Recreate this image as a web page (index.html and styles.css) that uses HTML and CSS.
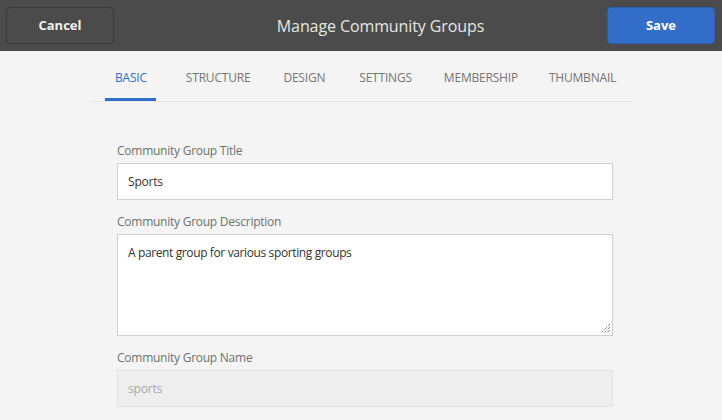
FILE: index.html
```html
<!DOCTYPE html>
<html>
<head>
<meta charset="utf-8">
<link rel="stylesheet" href="styles.css">
</head>
<body>
<header class="topbar">
  <button class="btn btn-cancel">Cancel</button>
  <h1 class="title">Manage Community Groups</h1>
  <button class="btn btn-save">Save</button>
</header>
<main class="content">
  <nav class="tabs">
    <a class="tab active">BASIC</a>
    <a class="tab">STRUCTURE</a>
    <a class="tab">DESIGN</a>
    <a class="tab">SETTINGS</a>
    <a class="tab">MEMBERSHIP</a>
    <a class="tab">THUMBNAIL</a>
  </nav>
  <form class="form">
    <label class="label">Community Group Title</label>
    <div class="input">Sports</div>
    <label class="label">Community Group Description</label>
    <div class="textarea">A parent group for various sporting groups
      <svg class="grip" width="10" height="10" viewBox="0 0 10 10"><path d="M9 3 L3 9 M9 6 L6 9 M9 0 L0 9" stroke="#555" stroke-width="1" stroke-dasharray="1 1" fill="none"/></svg>
    </div>
    <label class="label">Community Group Name</label>
    <div class="input disabled">sports</div>
  </form>
</main>
</body>
</html>
```
FILE: styles.css
```css
* { box-sizing: border-box; }
html, body { margin: 0; padding: 0; }
body {
  background: #f4f4f4;
  font-family: "Open Sans", "Noto Sans", sans-serif;
  width: 722px;
  height: 420px;
  overflow: hidden;
}
.topbar {
  height: 51px;
  background: #4b4b4b;
  display: flex;
  align-items: center;
  justify-content: space-between;
  padding: 0 7px 0 6px;
}
.btn {
  width: 108px;
  height: 37px;
  border-radius: 4px;
  font-family: "Open Sans", sans-serif;
  font-weight: 700;
  font-size: 13px;
  color: #fff;
  margin-top: -1px;
}
.btn-cancel {
  background: #4b4b4b;
  border: 1px solid #383838;
  color: #f0f0f0;
}
.btn-save {
  background: #326ec8;
  border: 1px solid #2a5db0;
}
.title {
  margin: 0 0 0 40px;
  font-size: 16px;
  font-weight: 400;
  color: #e6e6e6;
  letter-spacing: -0.1px;
}
.content {
  padding: 0 0 0 90px;
}
.tabs {
  width: 542px;
  height: 51px;
  display: flex;
  border-bottom: 1px solid #e6e6e6;
  padding-left: 15px;
}
.tab {
  font-size: 12px;
  color: #757575;
  padding: 18px 0 0;
  height: 50px;
  letter-spacing: -0.2px;
}
.tab:nth-child(2) { margin-left: 30px; }
.tab:nth-child(3) { margin-left: 33px; }
.tab:nth-child(4) { margin-left: 34px; }
.tab:nth-child(5) { margin-left: 32px; }
.tab:nth-child(6) { margin-left: 31px; }
.tab.active {
  color: #326ec8;
  border-bottom: 3px solid #326ec8;
  padding-left: 10px;
  padding-right: 9px;
}
.form {
  width: 496px;
  margin-left: 27px;
  padding-top: 40px;
  display: flex;
  flex-direction: column;
}
.label {
  font-size: 12px;
  color: #707070;
  height: 21px;
  letter-spacing: -0.25px;
}
.input {
  height: 37px;
  background: #fff;
  border: 1px solid #cfcfcf;
  font-size: 12px;
  color: #333;
  padding: 9px 10px;
  margin-bottom: 13px;
  letter-spacing: -0.2px;
}
.textarea {
  position: relative;
  height: 102px;
  background: #fff;
  border: 1px solid #cfcfcf;
  font-size: 12px;
  color: #333;
  padding: 9px 10px;
  margin-bottom: 13px;
  letter-spacing: -0.38px;
}
.grip {
  position: absolute;
  right: 1px;
  bottom: 1px;
}
.input.disabled {
  background: #eeeeee;
  border-color: #e2e2e2;
  color: #a8a8a8;
}
```
